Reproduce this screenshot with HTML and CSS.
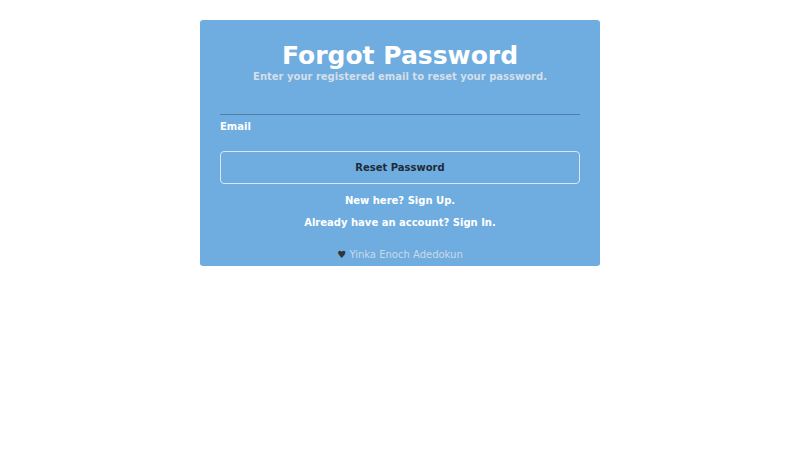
FILE: index.html
```html
<!DOCTYPE html>
<html lang="en">
<head>
<meta charset="utf-8">
<title>Forgot Password</title>
<link rel="stylesheet" href="styles.css">
</head>
<body>
<div class="card">
  <h1 class="title">Forgot Password</h1>
  <p class="subtitle">Enter your registered email to reset your password.</p>
  <form class="form">
    <input class="field" type="email" id="email">
    <label class="label" for="email">Email</label>
    <button class="btn" type="button">Reset Password</button>
  </form>
  <div class="links">
    <p class="link">New here? Sign Up.</p>
    <p class="link">Already have an account? Sign In.</p>
  </div>
  <p class="footer"><span class="heart">&#9829;</span> Yinka Enoch Adedokun</p>
</div>
</body>
</html>
```
FILE: styles.css
```css
html, body {
  margin: 0;
  padding: 0;
  background: #ffffff;
  font-family: "DejaVu Sans", Verdana, sans-serif;
}
.card {
  box-sizing: border-box;
  width: 400px;
  margin: 20px auto 0;
  padding: 21px 20px 5px;
  background: #6fade0;
  border-radius: 3px;
  text-align: center;
}
.title {
  margin: 0;
  font-size: 25px;
  line-height: 30px;
  font-weight: bold;
  color: #ffffff;
}
.subtitle {
  margin: 0;
  font-size: 10px;
  line-height: 12px;
  font-weight: bold;
  color: #d3dfeb;
}
.form {
  display: flex;
  flex-direction: column;
  margin-top: 11px;
}
.field {
  box-sizing: border-box;
  height: 21px;
  width: 100%;
  margin: 0;
  padding: 0;
  border: 0;
  border-bottom: 1px solid #4f7fab;
  background: transparent;
  outline: none;
}
.label {
  margin-top: 6px;
  text-align: left;
  font-size: 10px;
  line-height: 12px;
  font-weight: bold;
  color: #ffffff;
}
.btn {
  box-sizing: border-box;
  margin-top: 18px;
  height: 33px;
  width: 100%;
  border: 1px solid #d6e8f7;
  border-radius: 4px;
  background: transparent;
  font-family: "DejaVu Sans", Verdana, sans-serif;
  font-size: 10px;
  line-height: 12px;
  font-weight: bold;
  color: #1f2b38;
}
.links {
  margin-top: 6px;
}
.link {
  margin: 0;
  font-size: 10px;
  line-height: 22px;
  font-weight: bold;
  color: #ffffff;
}
.footer {
  margin: 15px 0 0;
  font-size: 10px;
  line-height: 12px;
  color: #cbd9e8;
}
.heart {
  color: #333333;
}
```
